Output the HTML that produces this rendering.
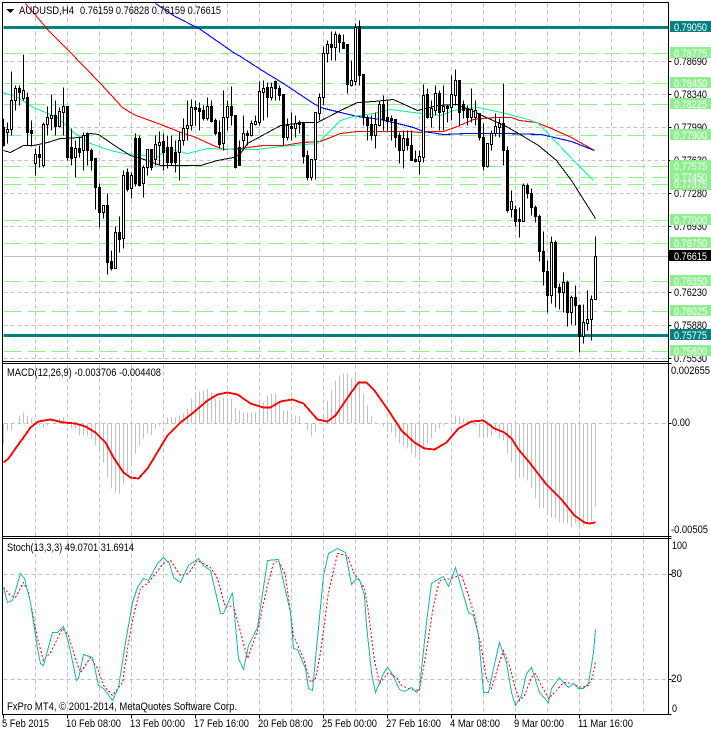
<!DOCTYPE html>
<html><head><meta charset="utf-8"><style>
html,body{margin:0;padding:0;background:#fff}
svg{display:block}
text{font-family:"Liberation Sans",sans-serif;font-size:11px;fill:#000}
.w{fill:#fff}
</style></head><body>
<svg width="711" height="732" viewBox="0 0 711 732" xmlns="http://www.w3.org/2000/svg" shape-rendering="crispEdges">
<rect width="711" height="732" fill="#fff"/>
<g transform="translate(.5,.5)" fill="none">
<!-- grid -->
<path stroke="#c0c0c0" stroke-dasharray="4 3" d="M35 3V361M67 3V361M99 3V361M131 3V361M163 3V361M195 3V361M227 3V361M259 3V361M291 3V361M323 3V361M355 3V361M387 3V361M419 3V361M451 3V361M483 3V361M515 3V361M547 3V361M579 3V361M611 3V361M643 3V361
M35 364V536M67 364V536M99 364V536M131 364V536M163 364V536M195 364V536M227 364V536M259 364V536M291 364V536M323 364V536M355 364V536M387 364V536M419 364V536M451 364V536M483 364V536M515 364V536M547 364V536M579 364V536M611 364V536M643 364V536
M35 539V714M67 539V714M99 539V714M131 539V714M163 539V714M195 539V714M227 539V714M259 539V714M291 539V714M323 539V714M355 539V714M387 539V714M419 539V714M451 539V714M483 539V714M515 539V714M547 539V714M579 539V714M611 539V714M643 539V714
M3 61H668M3 94H668M3 127H668M3 160H668M3 193H668M3 226H668M3 292H668M3 325H668M3 358H668
M3 423H668M3 574H668M3 679H668"/>
<path stroke="#c0c0c0" d="M3 256H668"/>
<!-- green levels -->
<path stroke="#90ee90" stroke-dasharray="18 6" d="M3 53H668M3 83H668M3 104H668M3 135H668M3 166H668M3 177H668M3 184H668M3 220H668M3 243H668M3 281H668M3 311H668M3 351H668"/>
<path stroke="#008080" stroke-width="3" d="M3 27H668M3 335H668"/>
<!-- MAs -->
<path stroke="#f00" stroke-width="1.1" d="M25 3L37 17L48 30L68 50L100 83L122 107L133 114L163 125L183 133L193 136L213 145L223 149L240 148L263 145L283 145L302 142L320 141L340 133L357 131L373 131L393 131L410 131L420 132L428 131L443 131L457 126L473 119L494 117L511 117L519 120L536 122L551 128L571 137L594 150"/>
<path stroke="#00f" stroke-width="1.1" d="M155 3L173 15L200 29L233 52L240 56L260 69L283 83L313 103L320 107L340 112L357 116L380 119L397 123L413 127L423 131L443 134L467 133L481 133L504 133L541 134L571 141L594 150"/>
<path stroke="#00fa9a" d="M3 92L17 97L33 107L57 117L73 132L90 143L110 150L123 153L147 155L157 157L167 148L187 153L207 148L240 149L257 149L280 146L317 143L323 137L340 120L353 116L373 113L390 109L413 112L440 115L453 110L478 107L501 112L528 119L538 123L554 140L578 165L593 180"/>
<path stroke="#000" d="M3 150L10 152L23 145L33 145L47 142L60 138L80 137L90 133L98 134L117 147L130 155L147 160L160 165L200 165L217 160L233 157L240 153L247 143L260 136L280 125L303 122L317 122L340 110L357 102L373 101L393 99L417 110L437 105L457 104L471 110L488 118L504 125L518 133L538 145L556 160L571 180L595 218"/>
<!-- wicks -->
<path stroke="#000" d="M3 118V146M7 122V143M11 71V135M15 85V110M19 85V105M23 54V100M27 92V145M31 120V146M35 148V175M39 145V167M43 122V167M47 106V135M51 94V130M55 100V135M59 107V127M63 87V135M67 106V160M71 128V165M75 140V177M79 137V157M83 132V170M87 132V165M91 148V170M95 158V209M99 183V227M103 205V218M107 193V274M111 250V270M115 226V268M119 216V252M123 170V248M127 168V191M131 172V198M135 133V186M139 135V186M143 165V197M147 149V175M151 149V170M155 135V165M159 131V165M163 133V170M167 135V168M171 135V165M175 140V172M179 132V180M183 118V145M187 100V140M191 99V130M195 100V125M199 102V130M203 105V120M207 97V120M211 100V122M215 118V135M219 120V147M223 90V150M227 100V130M231 86V125M235 115V168M239 140V165M243 115V150M247 130V145M251 120V136M255 115V125M259 81V125M263 80V120M267 82V117M271 82V100M275 80V100M279 85V100M283 94V145M287 118V140M291 112V140M295 115V137M299 120V133M303 122V163M307 150V180M311 159V180M315 112V179M319 93V120M323 46V105M327 40V62M331 31V60M335 31V60M339 33V52M343 34V48M347 44V93M351 60V86M355 23V85M359 20V85M363 74V125M367 115V140M371 115V140M375 112V148M379 100V126M383 95V130M387 100V130M391 115V140M395 119V147M399 132V163M403 130V168M407 130V150M411 130V160M415 150V162M419 150V174M423 84V162M427 88V118M431 100V127M435 85V115M439 90V130M443 85V130M447 105V122M451 75V120M455 69V105M459 80V125M463 100V118M467 105V125M471 88V122M475 100V125M479 113V140M483 123V170M487 143V167M491 130V150M495 113V136M499 118V137M503 83V165M507 146V212M511 190V217M515 205V226M519 207V237M523 183V221M527 183V198M531 188V215M535 205V222M539 214V261M543 231V285M547 260V312M551 236V303M555 240V307M559 283V309M563 272V312M567 280V326M571 295V324M575 285V325M579 304V352M583 304V343M587 290V330M591 295V340M595 236V299"/>
<!-- black bodies -->
<path fill="#000" stroke="#000" d="M2 127h2V145h-2zM18 88h2V92h-2zM26 97h2V132h-2zM30 130h2V133h-2zM38 154h2V157h-2zM54 115h2V126h-2zM66 106h2V157h-2zM70 147h2V158h-2zM78 148h2V152h-2zM86 133h2V150h-2zM90 150h2V160h-2zM94 158h2V187h-2zM98 187h2V212h-2zM106 205h2V262h-2zM110 261h2V268h-2zM118 232h2V239h-2zM126 172h2V189h-2zM134 138h2V183h-2zM138 138h2V185h-2zM150 149h2V167h-2zM162 141h2V152h-2zM166 147h2V162h-2zM170 147h2V162h-2zM174 152h2V162h-2zM194 107h2V109h-2zM198 108h2V111h-2zM202 110h2V118h-2zM210 106h2V121h-2zM214 120h2V133h-2zM218 132h2V144h-2zM230 106h2V115h-2zM234 115h2V167h-2zM238 147h2V165h-2zM246 133h2V135h-2zM266 87h2V97h-2zM274 81h2V88h-2zM278 88h2V95h-2zM282 94h2V137h-2zM290 126h2V128h-2zM298 122h2V124h-2zM302 122h2V156h-2zM306 155h2V177h-2zM330 44h2V47h-2zM338 35h2V42h-2zM342 42h2V48h-2zM346 44h2V84h-2zM358 26h2V75h-2zM362 74h2V117h-2zM366 117h2V125h-2zM370 124h2V135h-2zM382 104h2V119h-2zM386 117h2V121h-2zM390 118h2V120h-2zM394 119h2V137h-2zM398 135h2V150h-2zM406 138h2V145h-2zM410 145h2V160h-2zM414 159h2V161h-2zM426 94h2V117h-2zM438 93h2V112h-2zM446 106h2V108h-2zM458 80h2V112h-2zM462 104h2V110h-2zM466 108h2V117h-2zM474 110h2V113h-2zM478 113h2V137h-2zM482 137h2V166h-2zM502 123h2V150h-2zM506 150h2V210h-2zM514 209h2V221h-2zM518 219h2V221h-2zM526 185h2V193h-2zM530 193h2V207h-2zM534 207h2V216h-2zM538 216h2V251h-2zM542 251h2V271h-2zM546 271h2V295h-2zM554 242h2V287h-2zM558 287h2V292h-2zM566 282h2V312h-2zM574 297h2V305h-2zM578 305h2V336h-2z"/>
<!-- white bodies -->
<path fill="#fff" stroke="#000" d="M6 129h2V132h-2zM10 100h2V129h-2zM14 88h2V100h-2zM22 90h2V98h-2zM34 154h2V163h-2zM42 124h2V165h-2zM46 117h2V124h-2zM50 115h2V118h-2zM58 111h2V126h-2zM62 106h2V112h-2zM74 148h2V157h-2zM82 135h2V150h-2zM102 205h2V212h-2zM114 232h2V268h-2zM122 175h2V238h-2zM130 175h2V188h-2zM142 167h2V183h-2zM146 149h2V167h-2zM154 144h2V159h-2zM158 142h2V145h-2zM178 140h2V152h-2zM182 128h2V140h-2zM186 125h2V128h-2zM190 107h2V125h-2zM206 106h2V118h-2zM222 117h2V143h-2zM226 106h2V117h-2zM242 133h2V140h-2zM250 123h2V135h-2zM254 121h2V124h-2zM258 91h2V122h-2zM262 88h2V92h-2zM270 87h2V97h-2zM286 125h2V137h-2zM294 123h2V128h-2zM310 159h2V177h-2zM314 112h2V159h-2zM318 97h2V113h-2zM322 53h2V97h-2zM326 44h2V53h-2zM334 34h2V47h-2zM350 80h2V85h-2zM354 27h2V81h-2zM374 124h2V135h-2zM378 104h2V125h-2zM402 138h2V150h-2zM418 156h2V161h-2zM422 95h2V157h-2zM430 108h2V117h-2zM434 93h2V110h-2zM442 106h2V111h-2zM450 94h2V107h-2zM454 80h2V95h-2zM470 109h2V117h-2zM474 110h2V117h-2zM486 143h2V166h-2zM490 133h2V144h-2zM494 126h2V133h-2zM498 123h2V127h-2zM510 201h2V209h-2zM522 185h2V221h-2zM550 242h2V295h-2zM562 282h2V292h-2zM570 297h2V312h-2zM582 322h2V336h-2zM586 319h2V323h-2zM590 299h2V319h-2zM594 256h2V299h-2z"/>
<!-- MACD hist -->
<path stroke="#c0c0c0" d="M3 423V443M7 423V430M11 423V430M19 423V415M23 423V412M27 423V415M31 423V418M39 423V425M43 423V427M47 423V425M55 423V422M59 423V418M63 423V417M67 423V425M71 423V428M75 423V428M79 423V435M83 423V435M87 423V435M91 423V438M95 423V445M99 423V452M103 423V462M107 423V477M111 423V488M115 423V492M119 423V493M123 423V483M127 423V473M131 423V463M135 423V453M139 423V445M143 423V438M147 423V433M151 423V435M155 423V428M159 423V425M167 423V417M171 423V417M175 423V417M179 423V415M183 423V413M187 423V408M191 423V398M195 423V392M199 423V391M203 423V390M207 423V388M211 423V392M215 423V398M219 423V400M223 423V397M227 423V398M231 423V398M235 423V407M239 423V410M243 423V412M247 423V412M251 423V412M255 423V412M259 423V403M263 423V402M267 423V395M271 423V393M275 423V393M279 423V402M283 423V410M287 423V410M291 423V413M295 423V415M299 423V415M307 423V430M311 423V436M315 423V432M323 423V415M327 423V400M331 423V390M335 423V380M339 423V375M343 423V373M347 423V373M351 423V378M355 423V373M359 423V380M363 423V393M367 423V405M371 423V415M375 423V422M379 423V424M383 423V426M387 423V428M391 423V432M395 423V437M399 423V443M403 423V446M407 423V448M411 423V453M415 423V457M419 423V460M423 423V448M427 423V443M431 423V438M435 423V432M439 423V428M443 423V425M455 423V415M459 423V416M463 423V418M467 423V420M471 423V422M475 423V425M479 423V437M483 423V438M487 423V437M491 423V436M495 423V432M499 423V438M503 423V440M507 423V453M511 423V462M515 423V479M519 423V477M523 423V477M527 423V480M531 423V488M535 423V498M539 423V508M543 423V508M547 423V513M551 423V517M555 423V518M559 423V522M563 423V522M567 423V523M571 423V527M575 423V523M579 423V525M583 423V525M587 423V523M591 423V520M595 423V506"/>
<path stroke="#f00" stroke-width="1.9" d="M3 462L8 458L15 448L23 437L30 427L38 421L50 419L63 422L75 423L85 426L95 432L105 442L113 457L123 472L130 477L138 478L147 468L155 455L167 435L180 422L193 412L207 400L217 394L227 392L237 394L250 403L263 407L270 407L280 401L292 399L303 403L317 419L327 421L335 415L350 393L358 382L366 382L374 390L388 410L401 430L414 442L424 448L434 449L446 442L458 428L471 421L483 420L494 428L504 432L511 438L518 449L529 462L546 484L561 499L574 515L584 522L589 523L595 522"/>
<!-- Stoch -->
<path stroke="#f00" stroke-dasharray="2 2" d="M3 587L10 595L15 597L23 582L28 592L37 638L43 660L50 652L62 628L68 635L75 658L80 672L90 657L97 668L103 685L112 695L122 682L128 642L133 615L140 588L148 582L163 563L170 560L180 575L188 573L197 560L210 567L217 578L225 607L233 605L247 658L257 630L267 585L273 563L278 560L285 575L293 635L303 658L310 682L315 678L320 652L328 592L337 553L347 555L353 572L358 579L364 588L368 612L371 635L374 660L379 683L388 672L396 677L401 685L408 688L419 690L426 650L433 605L439 580L451 578L461 574L468 595L474 615L481 648L486 678L491 688L498 665L503 650L509 665L514 685L519 700L524 695L531 677L535 673L541 685L548 698L554 692L563 682L571 683L581 687L588 685L592 677L595 661"/>
<path stroke="#20b2aa" d="M3 587L7 602L12 600L20 573L24 578L30 602L37 648L40 663L43 665L52 632L57 632L63 626L68 642L76 680L78 678L83 654L92 657L98 685L103 688L112 700L118 687L125 642L132 602L137 587L143 578L148 580L157 563L163 557L169 563L173 577L180 582L188 565L198 558L203 565L210 570L220 613L223 613L232 592L238 658L243 669L248 645L257 627L267 560L278 559L290 612L293 648L297 649L305 668L308 688L312 690L323 575L328 553L337 548L345 552L351 584L356 578L359 579L364 595L366 625L371 672L375 692L383 673L387 667L391 672L399 689L404 691L411 687L416 692L419 688L426 622L431 583L439 578L443 576L448 586L455 567L468 612L473 615L478 635L483 692L488 692L493 668L499 642L506 662L511 692L515 705L521 695L526 673L531 667L539 692L548 702L551 688L559 677L563 682L568 687L573 683L578 688L583 688L588 683L593 652L595 629"/>
<!-- frames -->
<path stroke="#000" d="M2 2H668V714H2ZM2 361H668M2 363H668M2 536H668M2 538H668"/>
<!-- ticks -->
<path stroke="#000" d="M668 61h3M668 94h3M668 127h3M668 160h3M668 193h3M668 226h3M668 292h3M668 325h3M668 358h3M668 363h3M668 423h3M668 536h3M668 538h3M668 574h3M668 679h3M668 714h3M3 714v4M67 714v4M131 714v4M195 714v4M259 714v4M323 714v4M387 714v4M451 714v4M515 714v4M579 714v4"/>
</g>
<path d="M6 9h8l-4 4z" fill="#000"/>
<!-- gray axis labels -->
<text x="674" y="65" textLength="33" lengthAdjust="spacingAndGlyphs">0.78690</text>
<text x="674" y="98" textLength="33" lengthAdjust="spacingAndGlyphs">0.78340</text>
<text x="674" y="131" textLength="33" lengthAdjust="spacingAndGlyphs">0.77990</text>
<text x="674" y="164" textLength="33" lengthAdjust="spacingAndGlyphs">0.77630</text>
<text x="674" y="197" textLength="33" lengthAdjust="spacingAndGlyphs">0.77280</text>
<text x="674" y="230" textLength="33" lengthAdjust="spacingAndGlyphs">0.76930</text>
<text x="674" y="296" textLength="33" lengthAdjust="spacingAndGlyphs">0.76230</text>
<text x="674" y="329" textLength="33" lengthAdjust="spacingAndGlyphs">0.75880</text>
<text x="674" y="362" textLength="33" lengthAdjust="spacingAndGlyphs">0.75530</text>
<!-- level labels -->
<g fill="#90ee90">
<rect x="670" y="47" width="41" height="11"/><rect x="670" y="77" width="41" height="11"/><rect x="670" y="98" width="41" height="11"/><rect x="670" y="129" width="41" height="11"/>
<rect x="670" y="178" width="41" height="12"/><rect x="670" y="171" width="41" height="12"/><rect x="670" y="160" width="41" height="11"/>
<rect x="670" y="214" width="41" height="11"/><rect x="670" y="237" width="41" height="11"/><rect x="670" y="275" width="41" height="11"/><rect x="670" y="305" width="41" height="11"/><rect x="670" y="345" width="41" height="11"/>
</g>
<rect x="670" y="21" width="41" height="11" fill="#008080"/>
<rect x="670" y="329" width="41" height="11" fill="#008080"/>
<rect x="669" y="250" width="42" height="11" fill="#000"/>
<g class="lbl">
<text class="w" x="674" y="31" textLength="33" lengthAdjust="spacingAndGlyphs">0.79050</text>
<text class="w" x="674" y="57" textLength="33" lengthAdjust="spacingAndGlyphs">0.78775</text>
<text class="w" x="674" y="87" textLength="33" lengthAdjust="spacingAndGlyphs">0.78450</text>
<text class="w" x="674" y="108" textLength="33" lengthAdjust="spacingAndGlyphs">0.78225</text>
<text class="w" x="674" y="139" textLength="33" lengthAdjust="spacingAndGlyphs">0.77900</text>
<text class="w" x="674" y="188" textLength="33" lengthAdjust="spacingAndGlyphs">0.77375</text>
<text class="w" x="674" y="181" textLength="33" lengthAdjust="spacingAndGlyphs">0.77450</text>
<text class="w" x="674" y="170" textLength="33" lengthAdjust="spacingAndGlyphs">0.77575</text>
<text class="w" x="674" y="224" textLength="33" lengthAdjust="spacingAndGlyphs">0.77000</text>
<text class="w" x="674" y="247" textLength="33" lengthAdjust="spacingAndGlyphs">0.76750</text>
<text class="w" x="674" y="260" textLength="33" lengthAdjust="spacingAndGlyphs">0.76615</text>
<text class="w" x="674" y="285" textLength="33" lengthAdjust="spacingAndGlyphs">0.76350</text>
<text class="w" x="674" y="315" textLength="33" lengthAdjust="spacingAndGlyphs">0.76025</text>
<text class="w" x="674" y="339" textLength="33" lengthAdjust="spacingAndGlyphs">0.75775</text>
<text class="w" x="674" y="355" textLength="33" lengthAdjust="spacingAndGlyphs">0.75600</text>
</g>
<!-- MACD/Stoch axis -->
<text x="671" y="374" textLength="39" lengthAdjust="spacingAndGlyphs">0.002655</text>
<text x="672" y="426" textLength="18" lengthAdjust="spacingAndGlyphs">0.00</text>
<text x="671" y="533" textLength="37" lengthAdjust="spacingAndGlyphs">-0.00505</text>
<text x="672" y="549" textLength="15" lengthAdjust="spacingAndGlyphs">100</text>
<text x="671" y="577" textLength="11" lengthAdjust="spacingAndGlyphs">80</text>
<text x="671" y="682" textLength="11" lengthAdjust="spacingAndGlyphs">20</text>
<text x="672" y="712" textLength="5" lengthAdjust="spacingAndGlyphs">0</text>
<!-- titles -->
<text x="19" y="14" textLength="55" lengthAdjust="spacingAndGlyphs">AUDUSD,H4</text>
<text x="80" y="14" textLength="141" lengthAdjust="spacingAndGlyphs">0.76159 0.76828 0.76159 0.76615</text>
<text x="7" y="376" textLength="154" lengthAdjust="spacingAndGlyphs">MACD(12,26,9) -0.003706 -0.004408</text>
<text x="7" y="551" textLength="127" lengthAdjust="spacingAndGlyphs">Stoch(13,3,3) 49.0701 31.6914</text>
<text x="7" y="710" textLength="230" lengthAdjust="spacingAndGlyphs">FxPro MT4, © 2001-2014, MetaQuotes Software Corp.</text>
<!-- dates -->
<text x="2" y="727" textLength="47" lengthAdjust="spacingAndGlyphs">5 Feb 2015</text>
<text x="66" y="727" textLength="55" lengthAdjust="spacingAndGlyphs">10 Feb 08:00</text>
<text x="130" y="727" textLength="55" lengthAdjust="spacingAndGlyphs">13 Feb 00:00</text>
<text x="194" y="727" textLength="55" lengthAdjust="spacingAndGlyphs">17 Feb 16:00</text>
<text x="258" y="727" textLength="55" lengthAdjust="spacingAndGlyphs">20 Feb 08:00</text>
<text x="322" y="727" textLength="55" lengthAdjust="spacingAndGlyphs">25 Feb 00:00</text>
<text x="386" y="727" textLength="55" lengthAdjust="spacingAndGlyphs">27 Feb 16:00</text>
<text x="450" y="727" textLength="50" lengthAdjust="spacingAndGlyphs">4 Mar 08:00</text>
<text x="514" y="727" textLength="50" lengthAdjust="spacingAndGlyphs">9 Mar 00:00</text>
<text x="578" y="727" textLength="55" lengthAdjust="spacingAndGlyphs">11 Mar 16:00</text>
</svg>
</body></html>
